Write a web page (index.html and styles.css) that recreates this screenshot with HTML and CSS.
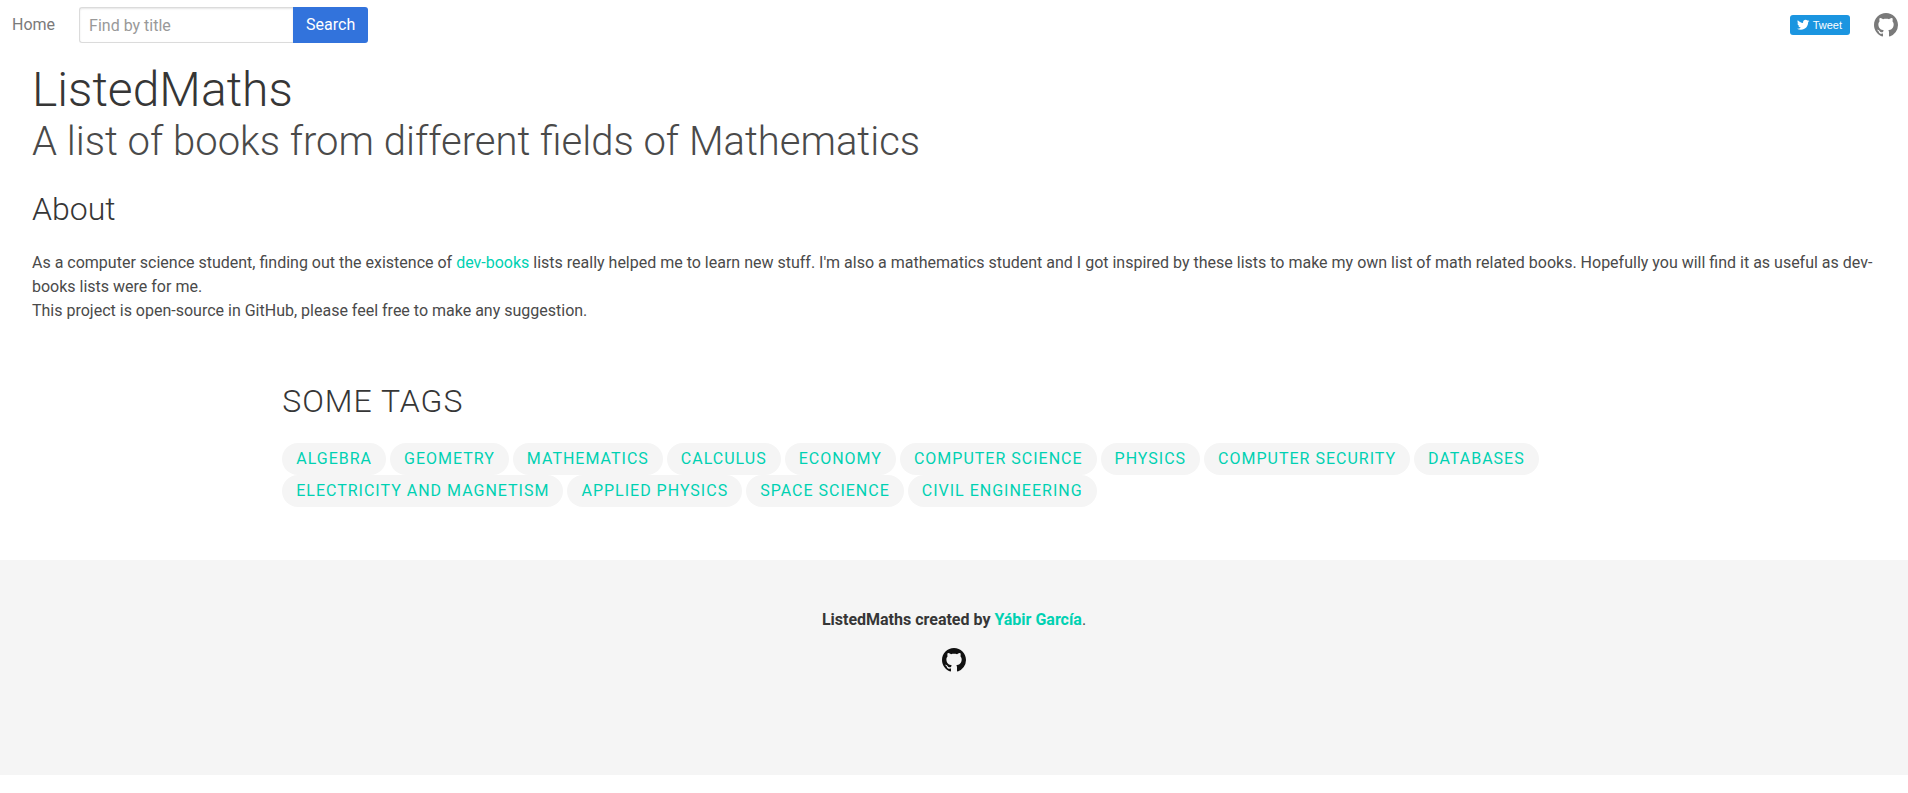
FILE: index.html
```html
<!DOCTYPE html>
<html lang="en">
<head>
<meta charset="utf-8">
<title>ListedMaths</title>
<link rel="stylesheet" href="styles.css">
</head>
<body>
<svg class="sprite" aria-hidden="true">
  <symbol id="github" viewBox="0 0 16 16"><path fill-rule="evenodd" d="M8 0C3.58 0 0 3.58 0 8c0 3.54 2.29 6.53 5.47 7.59.4.07.55-.17.55-.38 0-.19-.01-.82-.01-1.49-2.01.37-2.53-.49-2.69-.94-.09-.23-.48-.94-.82-1.13-.28-.15-.68-.52-.01-.53.63-.01 1.08.58 1.23.82.72 1.21 1.87.87 2.33.66.07-.52.28-.87.51-1.07-1.78-.2-3.64-.89-3.64-3.95 0-.87.31-1.59.82-2.15-.08-.2-.36-1.02.08-2.12 0 0 .67-.21 2.2.82.64-.18 1.32-.27 2-.27s1.36.09 2 .27c1.53-1.04 2.2-.82 2.2-.82.44 1.1.16 1.92.08 2.12.51.56.82 1.27.82 2.15 0 3.07-1.87 3.75-3.65 3.95.29.25.54.73.54 1.48 0 1.07-.01 1.93-.01 2.2 0 .21.15.46.55.38A8.01 8.01 0 0 0 16 8c0-4.42-3.58-8-8-8z"/></symbol>
</svg>
<nav class="nav">
  <a class="nav-item" href="#">Home</a>
  <form class="search">
    <input class="search-input" type="text" placeholder="Find by title" aria-label="Find by title">
    <button class="search-button" type="button">Search</button>
  </form>
  <div class="nav-right">
    <a class="tweet" href="#">
      <svg class="tweet-icon" viewBox="0 0 72 72" aria-hidden="true"><path d="M68.812 15.14c-2.348 1.04-4.87 1.744-7.52 2.06 2.704-1.62 4.78-4.186 5.757-7.243-2.53 1.5-5.33 2.592-8.314 3.176C56.35 10.59 52.948 9 49.182 9c-7.23 0-13.092 5.86-13.092 13.093 0 1.026.118 2.02.338 2.98C25.543 24.527 15.9 19.318 9.44 11.396c-1.125 1.936-1.77 4.184-1.77 6.58 0 4.543 2.312 8.552 5.824 10.9-2.146-.07-4.165-.658-5.93-1.64-.002.056-.002.11-.002.163 0 6.345 4.513 11.638 10.504 12.84-1.1.298-2.256.457-3.45.457-.845 0-1.666-.078-2.464-.23 1.667 5.2 6.5 8.985 12.23 9.09-4.482 3.51-10.13 5.605-16.26 5.605-1.055 0-2.096-.06-3.122-.184 5.794 3.717 12.676 5.882 20.067 5.882 24.083 0 37.25-19.95 37.25-37.25 0-.565-.013-1.133-.038-1.693 2.558-1.847 4.778-4.15 6.532-6.774z"/></svg>
      <span>Tweet</span>
    </a>
    <a class="nav-icon" href="#" aria-label="GitHub"><svg class="github"><use href="#github"/></svg></a>
  </div>
</nav>
<main>
  <section class="intro">
    <h1 class="title">ListedMaths</h1>
    <p class="subtitle">A list of books from different fields of Mathematics</p>
    <h2 class="heading">About</h2>
    <p class="text">As a computer science student, finding out the existence of <a href="#">dev-books</a> lists really helped me to learn new stuff. I'm also a mathematics student and I got inspired by these lists to make my own list of math related books. Hopefully you will find it as useful as dev-books lists were for me.<br>This project is open-source in GitHub, please feel free to make any suggestion.</p>
  </section>
  <section class="tags">
    <h2 class="heading">Some tags</h2>
    <div class="tag-list">
      <a class="tag" href="#">Algebra</a>
      <a class="tag" href="#">Geometry</a>
      <a class="tag" href="#">Mathematics</a>
      <a class="tag" href="#">Calculus</a>
      <a class="tag" href="#">Economy</a>
      <a class="tag" href="#">Computer Science</a>
      <a class="tag" href="#">Physics</a>
      <a class="tag" href="#">Computer Security</a>
      <a class="tag" href="#">Databases</a>
      <a class="tag" href="#">Electricity and Magnetism</a>
      <a class="tag" href="#">Applied Physics</a>
      <a class="tag" href="#">Space Science</a>
      <a class="tag" href="#">Civil Engineering</a>
    </div>
  </section>
</main>
<footer class="footer">
  <p><strong>ListedMaths created by <a href="#">Yábir García</a></strong>.</p>
  <a class="footer-icon" href="#" aria-label="GitHub"><svg class="github"><use href="#github"/></svg></a>
</footer>
</body>
</html>
```
FILE: styles.css
```css
*, *::before, *::after {
  box-sizing: border-box;
}

body {
  margin: 0;
  background: #fff;
  color: #4a4a4a;
  font-family: Roboto, "Liberation Sans", sans-serif;
  font-size: 16px;
  line-height: 24px;
}

h1, h2, p {
  margin: 0;
}

a {
  color: #00d1b2;
  text-decoration: none;
}

.sprite {
  display: none;
}

.github {
  display: block;
  width: 24px;
  height: 24px;
  fill: currentColor;
}

.nav {
  display: flex;
  align-items: center;
  height: 50px;
  padding: 0 10px 0 12px;
}

.nav-item,
.nav-icon {
  color: #7a7a7a;
}

.search {
  display: flex;
  margin-left: 24px;
}

.search-input {
  width: 214px;
  height: 36px;
  padding: 0 9px;
  border: 1px solid #dbdbdb;
  border-right: 0;
  border-radius: 3px 0 0 3px;
  box-shadow: inset 0 1px 2px rgba(10, 10, 10, 0.1);
  background: #fff;
  color: #363636;
  font: inherit;
}

.search-input::placeholder {
  color: #999;
}

.search-button {
  height: 36px;
  padding: 0 13px;
  border: 0;
  border-radius: 0 3px 3px 0;
  background: #3273dc;
  color: #fff;
  font: inherit;
}

.nav-right {
  display: flex;
  align-items: center;
  gap: 24px;
  margin-left: auto;
}

.tweet {
  display: flex;
  align-items: center;
  gap: 3px;
  height: 20px;
  padding: 0 8px 0 6px;
  border-radius: 3px;
  background: #1b95e0;
  color: #fff;
  font: 11px/20px "Liberation Sans", Arial, sans-serif;
}

.tweet-icon {
  width: 14px;
  height: 14px;
  fill: #fff;
}

.intro {
  padding: 13px 32px 0;
}

.title,
.subtitle,
.heading {
  font-weight: 300;
}

.title {
  color: #363636;
  font-size: 48px;
  line-height: 54px;
}

.subtitle {
  font-size: 40px;
  line-height: 50px;
}

.heading {
  color: #363636;
  font-size: 32px;
  line-height: 36px;
}

.intro .heading {
  margin: 24px 0;
}

.tags {
  padding: 60px 15% 53px;
  margin: 0 -4px;
  letter-spacing: 1px;
  text-transform: uppercase;
}

.tags .heading {
  margin-bottom: 24px;
}

.tag-list {
  display: flex;
  flex-wrap: wrap;
  column-gap: 4px;
}

.tag {
  padding: 0 14px;
  border-radius: 16px;
  background: #f5f5f5;
  line-height: 32px;
}

.footer {
  display: flex;
  flex-direction: column;
  align-items: center;
  gap: 16px;
  padding: 48px 24px 103px;
  background: #f5f5f5;
}

.footer strong {
  color: #363636;
  font-weight: 700;
}

.footer-icon {
  color: #111;
}
```
